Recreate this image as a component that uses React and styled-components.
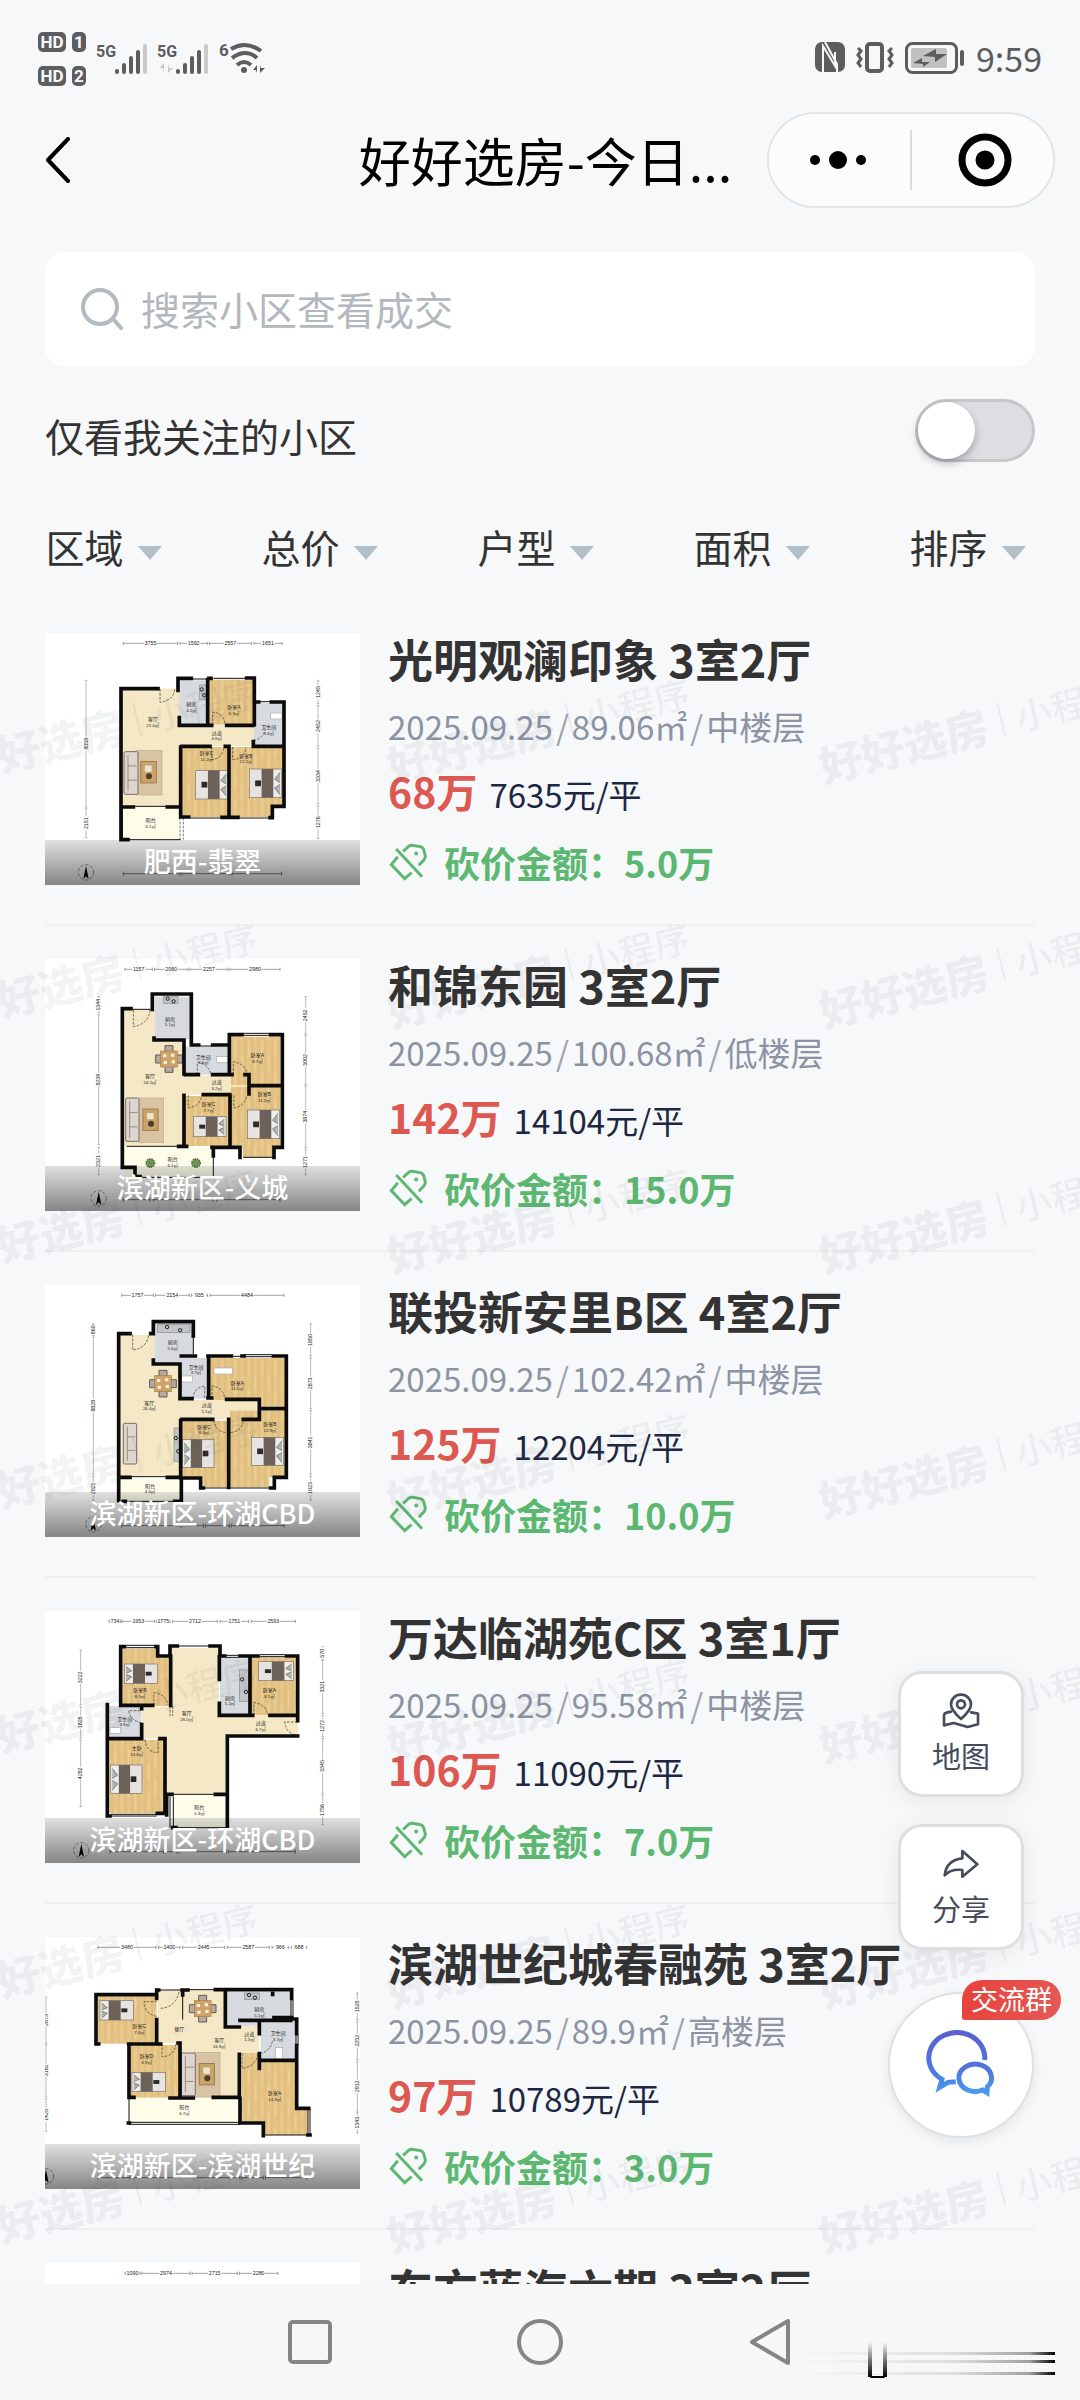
import React from "react";
import styled, { createGlobalStyle } from "styled-components";

const GlobalStyle = createGlobalStyle`
  * { box-sizing: border-box; }
  body {
    margin: 0;
    background: #f7f8fa;
    color: #333;
    font-family: "Noto Sans CJK SC", "Noto Sans", sans-serif;
  }
  button, input { font: inherit; color: inherit; }
  button { border: 0; padding: 0; background: none; cursor: pointer; }
`;

/* ---------- page frame ---------- */

const Screen = styled.div`
  position: relative;
  display: flex;
  flex-direction: column;
  height: 100vh;
  overflow: hidden;
`;

const StatusBar = styled.div`
  display: flex;
  justify-content: space-between;
  align-items: flex-start;
  height: 112px;
  padding: 32px 38px 0 38px;
  color: #5c5d5f;
`;

const StatusGroup = styled.div`
  display: flex;
  align-items: flex-start;
  gap: ${(p) => p.$gap}px;
  padding-top: ${(p) => p.$top || 0}px;
`;

const SimBadges = styled.div`
  display: grid;
  grid-template-columns: 28px 14px;
  gap: 14px 6px;
`;

const SimBadge = styled.span`
  height: 20px;
  border-radius: 5px;
  background: #5c5d5f;
  color: #f7f8fa;
  font-family: Roboto, "Liberation Sans", sans-serif;
  font-size: 17px;
  line-height: 20px;
  font-weight: 700;
  text-align: center;
`;

const StatusIcon = styled.svg`
  display: block;
  overflow: visible;
  font-family: Roboto, "Liberation Sans", sans-serif;
`;

const Clock = styled.time`
  font-size: 34px;
  line-height: 32px;
`;

const NavBar = styled.header`
  display: grid;
  grid-template-columns: 1fr auto 1fr;
  align-items: center;
  height: 96px;
  padding: 0 25px 0 36px;
`;

const BackButton = styled.button`
  justify-self: start;
  height: 64px;
  width: 44px;
  svg { display: block; margin: auto; }
`;

const PageTitle = styled.h1`
  margin: 0;
  color: #000;
  font-size: 52px;
  line-height: 76px;
  font-weight: 400;
  white-space: nowrap;
`;

const Capsule = styled.div`
  justify-self: end;
  display: flex;
  align-items: center;
  width: 288px;
  height: 96px;
  border: 2px solid #e4e4e6;
  border-radius: 48px;
  background: #fcfcfc;
`;

const CapsuleButton = styled.button`
  flex: 1;
  height: 60px;
  padding-right: 4px;
  display: flex;
  align-items: center;
  justify-content: center;
  & + & {
    padding: 0 0 0 4px;
    border-left: 2px solid #dcdcdc;
  }
`;

/* ---------- search and filters ---------- */

const SearchBox = styled.label`
  display: flex;
  align-items: center;
  gap: 18px;
  height: 114px;
  margin: 44px 45px 0;
  padding: 0 36px;
  border-radius: 20px;
  background: #fff;
`;

const SearchInput = styled.input`
  flex: 1;
  min-width: 0;
  border: 0;
  outline: 0;
  padding: 0 0 2px;
  background: none;
  font-size: 39px;
  line-height: 60px;
  &::placeholder { color: #b3b7be; opacity: 1; }
`;

const FollowRow = styled.div`
  display: flex;
  justify-content: space-between;
  align-items: flex-start;
  padding: 33px 45px 0;
`;

const FollowLabel = styled.label`
  padding-bottom: 2px;
  font-size: 39px;
  line-height: 72px;
`;

const Switch = styled.input`
  appearance: none;
  position: relative;
  width: 120px;
  height: 63px;
  margin: 0;
  border: 3px solid #c6c7c9;
  border-radius: 32px;
  background: #dddee2;
  &::before {
    content: "";
    position: absolute;
    left: 0;
    top: 0;
    width: 57px;
    height: 57px;
    border-radius: 50%;
    background: #fff;
    box-shadow: 0 4px 8px rgba(0, 0, 0, 0.28);
  }
  &:checked { background: #5cb86f; }
  &:checked::before { left: auto; right: 0; }
`;

const FilterBar = styled.nav`
  display: grid;
  grid-template-columns: repeat(5, 1fr);
  padding: 44px 0 25px;
`;

const FilterButton = styled.button`
  display: flex;
  align-items: center;
  justify-content: center;
  gap: 14px;
  padding-right: 9px;
  font-size: 39px;
  line-height: 58px;
`;

const Caret = styled.span`
  margin-top: 14px;
  border: 12px solid transparent;
  border-top: 14px solid #b3bfc8;
  border-bottom: 0;
`;

/* ---------- listing ---------- */

const ListArea = styled.main`
  position: relative;
  flex: 1;
  min-height: 0;
  overflow: hidden;
`;

const List = styled.ul`
  margin: 0;
  padding: 0 45px;
  list-style: none;
`;

const Item = styled.li`
  display: flex;
  align-items: flex-start;
  gap: 28px;
  padding: 33px 0 39px;
  border-bottom: 2px solid #eeeff1;
`;

const Thumb = styled.figure`
  position: relative;
  flex: none;
  width: 315px;
  height: 252px;
  margin: 0;
  overflow: hidden;
  background: #fff;
  svg { display: block; width: 100%; height: 100%; }
`;

const ThumbLabel = styled.figcaption`
  position: absolute;
  left: 0;
  right: 0;
  bottom: 0;
  height: 45px;
  background: linear-gradient(rgba(0, 0, 0, 0.12), rgba(0, 0, 0, 0.48));
  color: #fff;
  font-size: 27px;
  line-height: 42px;
  font-weight: 500;
  text-align: center;
`;

const Info = styled.div`
  flex: 1;
  min-width: 0;
`;

const Name = styled.h2`
  margin: 0;
  font-size: 45px;
  line-height: 52px;
  font-weight: 700;
  white-space: nowrap;
`;

const Meta = styled.p`
  margin: 18px 0 0;
  color: #8c94a3;
  font-size: 33px;
  line-height: 46px;
  white-space: nowrap;
`;

const Slash = styled.span`
  margin: 0 3px;
  color: #a0a4ab;
`;

const PriceRow = styled.p`
  display: flex;
  align-items: baseline;
  gap: 12px;
  margin: 14px 0 0;
  line-height: 54px;
`;

const Total = styled.strong`
  color: #dd5850;
  font-size: 41px;
`;

const Unit = styled.span`
  color: #1c2742;
  font-size: 33px;
`;

const Cut = styled.p`
  display: flex;
  align-items: center;
  gap: 16px;
  margin: 22px 0 0;
  color: #5cb870;
  font-size: 36px;
  line-height: 38px;
  font-weight: 700;
`;

const WatermarkLayer = styled.div`
  position: absolute;
  inset: 4px 0 0 -110px;
  display: grid;
  grid-template-columns: repeat(3, 432px);
  grid-auto-rows: 245px;
  overflow: hidden;
  pointer-events: none;
`;

const Watermark = styled.span`
  display: flex;
  align-items: center;
  justify-content: center;
  gap: 14px;
  color: rgba(60, 64, 80, 0.07);
  font-size: 36px;
  font-weight: 500;
  white-space: nowrap;
  transform: rotate(-14deg);
  b { font-size: 43px; font-weight: 900; }
  i { width: 2px; height: 34px; background: rgba(60, 64, 80, 0.07); }
`;

/* ---------- floating actions ---------- */

const FloatingStack = styled.div`
  position: absolute;
  right: 46px;
  bottom: 262px;
  display: flex;
  flex-direction: column;
  align-items: center;
  gap: 27px;
`;

const FloatButton = styled.button`
  display: flex;
  flex-direction: column;
  align-items: center;
  justify-content: center;
  gap: 4px;
  width: 126px;
  height: 126px;
  border: 3px solid #dedfe1;
  border-radius: 24px;
  background: #fff;
  box-shadow: 0 4px 24px rgba(0, 0, 0, 0.07);
  color: #454c5e;
  font-size: 29px;
  line-height: 42px;
`;

const ChatButton = styled.button`
  position: relative;
  width: 146px;
  height: 146px;
  margin-top: 15px;
  border: 2px solid #dfe0e2;
  border-radius: 50%;
  background: #fff;
  box-shadow: 0 4px 12px rgba(0, 0, 0, 0.08);
  svg { display: block; margin: 0 auto; }
`;

const ChatBadge = styled.span`
  position: absolute;
  top: -14px;
  right: -29px;
  height: 40px;
  padding: 0 9px;
  border-radius: 20px 20px 20px 3px;
  background: linear-gradient(100deg, #e8413a, #e35a57);
  color: #fff;
  font-size: 27px;
  line-height: 38px;
`;

/* ---------- system keys ---------- */

const SystemBar = styled.footer`
  position: relative;
  display: flex;
  align-items: center;
  justify-content: center;
  gap: 182px;
  height: 116px;
  background: #f7f7f7;
`;

const SystemKey = styled.button`
  display: flex;
  justify-content: center;
  width: 48px;
`;

const Smudge = styled.svg`
  position: absolute;
  right: 24px;
  bottom: 20px;
`;

/* ---------- status icons ---------- */

const Signal = ({ data }) => (
  <StatusIcon width="50" height="32" viewBox="0 0 50 32" fill="#5c5d5f">
    <text x="-2" y="15" fontSize="16" fontWeight="700">5G</text>
    {data && <path d="M5 31V21L1 26h3M9 21v10l5-5h-4" fill="#c4c5c7" />}
    <rect x="17" y="27" width="4" height="5" rx="2" />
    <rect x="24" y="21" width="4" height="11" rx="2" />
    <rect x="31" y="14" width="4" height="18" rx="2" />
    <rect x="38" y="8" width="4" height="24" rx="2" />
    <rect x="45" y="2" width="4" height="30" rx="2" fill="#c9cacc" />
  </StatusIcon>
);

const Wifi = () => (
  <StatusIcon width="46" height="32" viewBox="0 0 46 32" fill="none" stroke="#5c5d5f" strokeWidth="4">
    <text x="-1" y="14" fontSize="17" fontWeight="700" fill="#5c5d5f" stroke="none">6</text>
    <path d="M11 7Q26-2 41 9M12 16Q26 6 37 16M17 23Q24 17 31 23" />
    <circle cx="24" cy="28" r="3" fill="#5c5d5f" stroke="none" />
    <path d="M37 31V23l-4 5h3zM40 23v8l5-5h-4z" fill="#5c5d5f" stroke="none" />
  </StatusIcon>
);

const Nfc = () => (
  <StatusIcon width="30" height="30" viewBox="0 0 30 30">
    <rect width="30" height="30" rx="7" fill="#5c5d5f" />
    <path d="M8 30V4L20 24V10M10 0L22 22V30" fill="none" stroke="#f7f8fa" strokeWidth="2" />
  </StatusIcon>
);

const Vibrate = () => (
  <StatusIcon width="38" height="31" viewBox="0 0 38 31" fill="none" stroke="#5c5d5f" strokeWidth="3">
    <rect x="11" y="2" width="15" height="27" rx="3" strokeWidth="4" />
    <path d="M2 6l3 3-3 4 3 4-3 4 3 4M36 6l-3 3 3 4-3 4 3 4-3 4" />
  </StatusIcon>
);

const Battery = () => (
  <StatusIcon width="60" height="32" viewBox="0 0 60 32">
    <rect x="1.5" y="1.5" width="50" height="29" rx="6" fill="none" stroke="#5c5d5f" strokeWidth="3" />
    <rect x="6" y="6" width="36" height="20" rx="2" fill="#bfc1c2" />
    <path d="M18 14L31 7V12H42L30 20V15ZM8 21L17 16V20H25L18 25V22Z" fill="#5c5d5f" />
    <rect x="55" y="8" width="4" height="16" rx="2" fill="#5c5d5f" />
  </StatusIcon>
);

/* ---------- floor plan drawing ---------- */

const FILLS = { wood: "url(#wood)", tile: "url(#tile)", cream: "url(#cream)", porch: "#fdfdea" };

const HiddenDefs = styled.svg`
  position: absolute;
`;

const PlanSvg = styled.svg`
  font-family: "Liberation Sans", "Noto Sans CJK SC", sans-serif;
`;

const PatternDefs = () => (
  <HiddenDefs width="0" height="0" aria-hidden="true">
    <defs>
      <pattern id="wood" width="40" height="90" patternUnits="userSpaceOnUse">
        <rect width="40" height="90" fill="#e5c486" />
        <path d="M6 0V90M26 0V90" stroke="#dcb876" strokeWidth="3" />
        <path d="M16 0V50M36 40V90" stroke="#ecd199" strokeWidth="4" />
      </pattern>
      <pattern id="tile" width="12" height="12" patternUnits="userSpaceOnUse">
        <rect width="12" height="12" fill="#d8dbdf" />
        <path d="M0 0H12M0 0V12" stroke="#ccd0d5" strokeWidth="1.5" />
      </pattern>
      <pattern id="cream" width="26" height="26" patternUnits="userSpaceOnUse">
        <rect width="26" height="26" fill="#f5e8c6" />
        <path d="M0 0H26M0 0V26" stroke="#f0dfb8" strokeWidth="2" />
      </pattern>
    </defs>
  </HiddenDefs>
);

const Bed = ({ at: [x, y, w, h, flip] }) => (
  <g transform={flip ? `translate(${2 * x + w} 0) scale(-1 1)` : undefined}>
    <rect x={x} y={y} width={w} height={h} fill="#e6e3e0" stroke="#77706a" strokeWidth="2" />
    <rect x={x + w * 0.38} y={y} width={w * 0.36} height={h} fill="#6d625a" />
    <rect x={x + w * 0.76} y={y + 3} width={w * 0.22} height={h - 6} fill="#efedea" />
    <path
      d={`M${x + w * 0.95} ${y + h * 0.12}L${x + w * 0.78} ${y + h * 0.36}L${x + w * 0.95} ${y + h * 0.48}M${x + w * 0.95} ${y + h * 0.54}L${x + w * 0.78} ${y + h * 0.66}L${x + w * 0.95} ${y + h * 0.9}`}
      fill="#a9b4b6"
      stroke="#655b52"
      strokeWidth="2"
    />
    <rect x={x + w * 0.18} y={y + h * 0.4} width={w * 0.18} height={h * 0.2} fill="#2d2a28" />
  </g>
);

const Sofa = ({ at: [x, y, w, h] }) => (
  <g fill="#ddd5ce" stroke="#786b63" strokeWidth="3">
    <rect x={x} y={y} width={w} height={h} rx="4" />
    <path d={`M${x + 12} ${y + 10}V${y + h - 10}M${x + 12} ${y + h / 3}H${x + w - 4}M${x + 12} ${y + (h * 2) / 3}H${x + w - 4}`} fill="none" strokeWidth="2" />
  </g>
);

const Rug = ({ at: [x, y, w, h] }) => (
  <g>
    <rect x={x} y={y} width={w} height={h} fill="#d8c4a4" stroke="#c0aa8c" strokeWidth="2" />
    <rect x={x + w * 0.18} y={y + h * 0.25} width={w * 0.6} height={h * 0.48} fill="#c9a468" stroke="#a07c4c" strokeWidth="3" />
    <rect x={x + w * 0.34} y={y + h * 0.34} width={w * 0.26} height={h * 0.14} fill="#ece4d6" />
    <circle cx={x + w * 0.5} cy={y + h * 0.58} r="9" fill="#4e3b28" />
  </g>
);

const Dining = ({ at: [x, y] }) => (
  <g transform={`translate(${x} ${y})`}>
    <path d="M-12-40H12V-20H-12ZM-12 20H12V40H-12ZM-40-12H-20V12H-40ZM20-12H40V12H20Z" fill="#b4aaa1" stroke="#645b54" strokeWidth="3" />
    <rect x="-25" y="-24" width="50" height="48" fill="#cfa366" stroke="#a47c46" strokeWidth="2" />
    <path d="M-18-14h10v9h-10zM6-16h10v9h-10zM-16 6h10v9h-10zM8 4h10v9h-10z" fill="#f6f2e9" />
  </g>
);

const DimText = ({ x, y, v, children }) => (
  <text x={x} y={y} fontSize="16" textAnchor="middle" fill="#222" transform={v ? `rotate(-90 ${x} ${y})` : undefined}>
    {children}
  </text>
);

const FloorPlan = ({ plan }) => (
  <PlanSvg viewBox={`45 ${plan.top} 945 756`} preserveAspectRatio="none" role="img" aria-label="户型图">
    <rect x="45" y={plan.top} width="945" height="756" fill="#fff" />
    {plan.rooms.map(([kind, x, y, w, h], i) => (
      <rect key={i} x={x} y={y} width={w} height={h} fill={FILLS[kind]} />
    ))}
    {(plan.rugs || []).map((r, i) => <Rug key={i} at={r} />)}
    {(plan.sofas || []).map((r, i) => <Sofa key={i} at={r} />)}
    {(plan.beds || []).map((r, i) => <Bed key={i} at={r} />)}
    {(plan.tables || []).map((r, i) => <Dining key={i} at={r} />)}
    {(plan.whites || []).map(([x, y, w, h], i) => (
      <rect key={i} x={x} y={y} width={w} height={h} fill="#fff" stroke="#aaa" strokeWidth="2" />
    ))}
    {(plan.stoves || []).map(([x, y, w, h], i) => (
      <g key={i}>
        <rect x={x} y={y} width={w} height={h} fill="#c2c4c6" stroke="#8b8d90" strokeWidth="2" />
        <circle cx={x + w * 0.3} cy={y + h * 0.3} r="5" fill="none" stroke="#222" strokeWidth="3" />
        <circle cx={x + w * 0.7} cy={y + h * 0.7} r="5" fill="none" stroke="#222" strokeWidth="3" />
      </g>
    ))}
    {(plan.plants || []).map(([x, y], i) => (
      <circle key={i} cx={x} cy={y} r="13" fill="#6f9252" stroke="#4b6a37" strokeWidth="4" strokeDasharray="4 3" />
    ))}
    <path d={plan.doors} fill="none" stroke="#333" strokeWidth="2" strokeDasharray="8 4" />
    <path d={plan.thin} fill="none" stroke="#111" strokeWidth="3" />
    <path d={plan.walls} fill="none" stroke="#0b0b0b" strokeWidth="11" strokeLinecap="square" />
    {plan.names.map(([x, y, name, area], i) => (
      <g key={i} fontSize="15" textAnchor="middle" fill="#222">
        <text x={x} y={y}>{name}</text>
        {area && <text x={x} y={y + 17} fontSize="13">{area}</text>}
      </g>
    ))}
    {plan.across.map(([x1, x2, n], i) => (
      <g key={i}>
        <path d={`M${x1} ${plan.top + 31}H${(x1 + x2) / 2 - 20}M${(x1 + x2) / 2 + 20} ${plan.top + 31}H${x2}M${x1} ${plan.top + 26}v10M${x2} ${plan.top + 26}v10`} stroke="#777" strokeWidth="2" />
        <DimText x={(x1 + x2) / 2} y={plan.top + 37}>{n}</DimText>
      </g>
    ))}
    {plan.down.map(([x, y1, y2, n], i) => (
      <g key={i}>
        <path d={`M${x} ${y1}V${(y1 + y2) / 2 - 20}M${x} ${(y1 + y2) / 2 + 20}V${y2}M${x - 4} ${y1}h8M${x - 4} ${y2}h8`} stroke="#999" strokeWidth="2" />
        <DimText x={x + 5} y={(y1 + y2) / 2} v>{n}</DimText>
      </g>
    ))}
    <g transform={`translate(${plan.north} ${plan.top + 718})`}>
      <circle r="23" fill="none" stroke="#666" strokeWidth="2" strokeDasharray="10 5" />
      <path d="M0-20L8 20L0 12L-8 20Z" fill="#000" />
    </g>
    {plan.base.map(([x1, x2], i) => (
      <path key={i} d={`M${x1} ${plan.top + 722}H${x2}M${x1} ${plan.top + 716}v12M${x2} ${plan.top + 716}v12`} stroke="#444" strokeWidth="2" />
    ))}
  </PlanSvg>
);

const PLANS = [
  {
    top: 38,
    north: 168,
    rooms: [
      ["cream", 275, 205, 175, 355], ["cream", 440, 315, 232, 62], ["tile", 448, 180, 85, 133],
      ["wood", 537, 178, 132, 135], ["tile", 672, 248, 90, 128], ["wood", 455, 380, 143, 210],
      ["wood", 602, 380, 125, 210], ["wood", 720, 380, 40, 180], ["porch", 275, 562, 172, 96],
    ],
    rugs: [[318, 390, 78, 134]],
    sofas: [[282, 394, 42, 128]],
    beds: [[497, 450, 97, 86], [658, 446, 97, 86]],
    whites: [[722, 278, 34, 18]],
    stoves: [[509, 194, 20, 44]],
    walls: "M384 205H273V658H294M444 210V174H484M448 292V315H545M533 178V312M590 315H668M543 174H537M650 173H673V313M673 245H686M724 245H762V558H727V592H720M670 364V378H756M586 378H597V590M456 378H540M452 380V590H476M576 591H624M278 560H310M412 560H446",
    thin: "M484 176H533M550 174H645M690 244H720M480 593H570M630 593H715M277 562V658H452M300 558H450",
    doors: "M390 206V246Q432 240 434 206M548 314V276Q580 276 586 314M545 380V418Q576 416 582 380M608 380V418Q645 416 648 380M670 360Q700 356 706 325M450 592V658M460 592V658",
    names: [[368, 303, "客厅", "22.4㎡"], [484, 258, "厨房", "4.2㎡"], [612, 266, "卧室A", "6.3㎡"], [560, 343, "过道", "4.6㎡"], [716, 327, "卫生间", "3.4㎡"], [530, 405, "卧室C", "11.2㎡"], [648, 412, "卧室B", "12.1㎡"], [362, 605, "阳台", "6.1㎡"]],
    across: [[280, 443, "3755"], [450, 532, "1592"], [538, 664, "2557"], [672, 756, "1651"]],
    down: [[168, 180, 560, "8058"], [168, 565, 652, "2151"], [864, 180, 250, "1245"], [864, 256, 378, "2452"], [864, 384, 550, "3334"], [864, 556, 655, "1276"]],
    base: [[280, 450], [456, 600], [606, 755]],
  },
  {
    top: 25,
    north: 206,
    rooms: [
      ["cream", 283, 178, 178, 408], ["tile", 375, 138, 107, 128], ["tile", 465, 288, 130, 84],
      ["cream", 458, 374, 200, 58], ["wood", 603, 258, 147, 145], ["wood", 466, 436, 132, 150],
      ["wood", 603, 408, 147, 185], ["wood", 638, 590, 92, 30], ["porch", 283, 590, 266, 88],
    ],
    rugs: [[325, 442, 76, 133]],
    sofas: [[287, 442, 40, 130]],
    beds: [[490, 498, 98, 60], [652, 478, 97, 86]],
    tables: [[417, 325]],
    whites: [[560, 318, 34, 18]],
    stoves: [[400, 138, 44, 20]],
    plants: [[361, 637], [498, 637]],
    walls: "M303 174H277V650H315V678H330M367 176V130H484V280M484 283H506M548 283H590M372 262V268H462V370M462 434V585M466 372H505M548 372H606M598 252V370M600 252H636M722 252H757V590H732V620M645 372H657V430M660 405H750M600 434V585M520 432H598M546 590H630V620M550 595V616M446 587H470",
    thin: "M640 248H718M640 254H718M510 286H545M482 175V235M550 620V678M330 680H550M640 620H730M290 587H460M308 176H362",
    doors: "M310 178V228Q356 220 360 178M502 372V335Q538 342 542 372M610 372V333Q648 340 650 370M475 434V472Q512 466 515 434M612 434V472Q646 466 650 434",
    names: [[360, 382, "客厅", "24.5㎡"], [420, 210, "厨房", "5.1㎡"], [520, 324, "卫生间", "3.6㎡"], [682, 320, "卧室A", "8.7㎡"], [560, 400, "过道", "3.2㎡"], [536, 466, "卧室C", "7.7㎡"], [703, 437, "卧室B", "11.2㎡"], [428, 632, "阳台", "6.1㎡"]],
    across: [[285, 367, "1157"], [373, 474, "2060"], [480, 594, "2257"], [600, 750, "2980"]],
    down: [[206, 138, 186, "1344"], [206, 192, 582, "8239"], [206, 590, 672, "2321"], [827, 138, 250, "2452"], [827, 254, 402, "3002"], [827, 406, 590, "3874"], [827, 596, 672, "1271"]],
    base: [[280, 360], [370, 550], [560, 750]],
  },
  {
    top: 43,
    north: 190,
    rooms: [
      ["cream", 270, 193, 182, 424], ["tile", 374, 158, 115, 122], ["tile", 454, 262, 80, 122],
      ["wood", 540, 262, 226, 150], ["cream", 448, 388, 238, 58], ["wood", 456, 450, 140, 170],
      ["wood", 520, 618, 74, 32], ["wood", 600, 420, 166, 200], ["wood", 600, 618, 118, 32], ["porch", 268, 622, 188, 70],
    ],
    sofas: [[280, 458, 40, 122]],
    beds: [[458, 506, 94, 85, true], [664, 500, 97, 84]],
    tables: [[399, 339]],
    whites: [[454, 316, 34, 18], [552, 292, 56, 18]],
    stoves: [[382, 162, 98, 24], [432, 472, 18, 100]],
    walls: "M300 189H266V690M362 189H370V153H490V196M370 268V280H450V380M454 256H496M450 384H486M534 382H545M536 260V380M534 256H604M642 256H636M730 256H769V620H733V652H722M590 386H688V446H640M690 414H765M456 446H548M452 450V622H512V652H520M596 446V650M266 620H300M412 620H450M454 625V690M280 692H286M434 692H444",
    thin: "M605 257H640M640 252H725M640 258H725M490 190V250M522 652H718M266 692H454M305 618H410",
    doors: "M308 192V238Q352 232 356 192M488 384Q492 350 524 346V384M546 384V346Q580 350 584 384M552 448Q556 484 592 486M602 486Q638 480 640 448",
    names: [[358, 402, "客厅", "26.4㎡"], [428, 220, "厨房", "5.6㎡"], [498, 294, "卫生间", "3.7㎡"], [622, 342, "卧室A", "11.5㎡"], [530, 410, "过道", "5.1㎡"], [522, 474, "卧室C", "8.4㎡"], [720, 467, "卧室B", "12.9㎡"], [360, 651, "阳台", "4.6㎡"]],
    across: [[275, 370, "1757"], [376, 478, "2154"], [484, 532, "935"], [540, 762, "4484"]],
    down: [[190, 160, 195, "860"], [190, 200, 610, "8828"], [190, 616, 690, "2021"], [842, 160, 256, "1850"], [842, 262, 414, "2873"], [842, 420, 610, "3841"], [842, 616, 688, "1023"]],
    base: [[275, 450], [456, 520], [526, 598], [604, 762]],
  },
  {
    top: 33,
    north: 154,
    rooms: [
      ["wood", 278, 146, 108, 172], ["wood", 380, 172, 42, 146], ["cream", 426, 144, 140, 440],
      ["cream", 336, 320, 100, 96], ["cream", 408, 348, 178, 234], ["cream", 560, 348, 244, 60],
      ["tile", 570, 172, 88, 174], ["wood", 662, 172, 138, 174], ["tile", 236, 318, 98, 98],
      ["wood", 238, 420, 166, 220], ["porch", 430, 586, 157, 96],
    ],
    beds: [[283, 192, 100, 58, true], [686, 185, 104, 57], [242, 495, 94, 85, true]],
    whites: [[240, 382, 32, 18]],
    stoves: [[628, 210, 28, 94]],
    walls: "M284 140H272V316H368M378 140H383V168H422V316M420 166V138H442M540 138H570V168H584M568 170V238M568 310V346H668M660 170V344M630 168H684M720 346H798M770 168H803V362M803 408H592V683M232 314V648H240M275 316H335V326M335 374V416H238M390 416H405V640H382M410 645V583H426M556 583H588M428 683H438",
    thin: "M290 136H375M290 143H375M447 138H535M587 166H625M587 172H625M690 164H765M690 170H765M243 648H380M243 643H380M430 683H595M420 590V683M430 590V683M430 583H550",
    doors: "M372 316V278Q408 282 414 316M334 368Q300 362 296 332H334M345 418Q350 458 384 458V418M672 346V308Q708 312 714 346M803 366H764Q768 402 803 406M420 318V348M428 318V348",
    names: [[330, 276, "卧室B", "8.5㎡"], [470, 346, "客厅", "26.0㎡"], [600, 299, "厨房", "5.2㎡"], [718, 276, "卧室A", "8.1㎡"], [692, 376, "过道", "6.7㎡"], [284, 362, "卫生间", "3.9㎡"], [320, 450, "主卧", "14.6㎡"], [508, 628, "阳台", "5.3㎡"]],
    across: [[238, 272, "734"], [276, 374, "1953"], [380, 420, "1775"], [428, 562, "2712"], [570, 656, "1751"], [664, 796, "2593"]],
    down: [[152, 150, 314, "3222"], [152, 320, 414, "1828"], [152, 420, 620, "4282"], [878, 140, 180, "570"], [878, 180, 340, "3321"], [878, 346, 410, "1272"], [878, 416, 580, "3345"], [878, 586, 674, "1756"]],
    base: [[240, 400], [406, 440], [446, 590], [596, 796]],
  },
  {
    top: 52,
    north: 48,
    rooms: [
      ["wood", 204, 230, 176, 142], ["cream", 384, 212, 200, 158], ["cream", 450, 212, 134, 322],
      ["cream", 560, 326, 70, 208], ["cream", 628, 304, 60, 96], ["tile", 590, 216, 194, 102],
      ["tile", 692, 304, 106, 116], ["wood", 302, 376, 144, 158], ["wood", 634, 400, 54, 206],
      ["wood", 680, 426, 116, 182], ["wood", 704, 570, 130, 76], ["porch", 297, 537, 332, 70],
    ],
    rugs: [[494, 398, 76, 134]],
    sofas: [[454, 400, 42, 128]],
    beds: [[210, 243, 100, 58, true], [306, 458, 100, 58, true]],
    tables: [[518, 267]],
    whites: [[736, 384, 22, 34]],
    stoves: [[644, 220, 44, 20]],
    walls: "M378 225H198V373H206M380 211V236M380 211H386M380 300V368M456 211H474M458 215V226M556 210H785V236M586 214V322H628M728 222V224M732 294H785V298H800V342M630 302H782M688 304V342M688 402V446M692 422H800V566H836M800 378V422M296 373H392M444 370H450V535H490M297 376V533H312M420 535H450M550 533H628V404M630 536V610H700V648M295 610H298M834 646H840",
    thin: "M390 211H450M478 210H552M783 240V294M789 240V294M798 345V376M804 345V376M834 568V645M840 568V645M705 646H835M297 614H630M297 608H630M297 537V610M458 226V300",
    doors: "M380 290Q342 282 342 246H380M392 266Q440 262 448 212M396 372V412Q434 408 438 372M636 400V446Q680 440 684 400M690 402Q720 396 728 362",
    names: [[328, 326, "卧室C", "7.4㎡"], [448, 334, "餐厅", ""], [568, 368, "客厅", "24.8㎡"], [688, 274, "厨房", "5.1㎡"], [658, 348, "过道", "1.3㎡"], [744, 347, "卫生间", "3.7㎡"], [350, 416, "卧室D", "6.9㎡"], [734, 527, "卧室A", "14.3㎡"], [463, 569, "阳台", "6.7㎡"]],
    across: [[204, 378, "3480"], [386, 450, "1400"], [458, 584, "2445"], [592, 718, "2587"], [726, 776, "966"], [784, 830, "688"]],
    down: [[48, 232, 370, "2873"], [48, 374, 530, "3161"], [48, 536, 636, "1425"], [982, 220, 300, "1520"], [982, 306, 420, "2252"], [982, 426, 574, "2912"], [982, 578, 640, "1343"]],
    base: [[204, 300], [310, 630], [636, 700], [706, 830]],
  },
  {
    top: 38,
    north: 168,
    rooms: [],
    walls: "",
    thin: "",
    doors: "",
    names: [],
    across: [[285, 330, "1090"], [336, 480, "2974"], [486, 622, "2715"], [628, 744, "2280"]],
    down: [],
    base: [],
  },
];

/* ---------- data ---------- */

const LISTINGS = [
  { name: "光明观澜印象 3室2厅", date: "2025.09.25", area: "89.06㎡", floor: "中楼层", total: "68万", unit: "7635元/平", cut: "5.0万", region: "肥西-翡翠" },
  { name: "和锦东园 3室2厅", date: "2025.09.25", area: "100.68㎡", floor: "低楼层", total: "142万", unit: "14104元/平", cut: "15.0万", region: "滨湖新区-义城" },
  { name: "联投新安里B区 4室2厅", date: "2025.09.25", area: "102.42㎡", floor: "中楼层", total: "125万", unit: "12204元/平", cut: "10.0万", region: "滨湖新区-环湖CBD" },
  { name: "万达临湖苑C区 3室1厅", date: "2025.09.25", area: "95.58㎡", floor: "中楼层", total: "106万", unit: "11090元/平", cut: "7.0万", region: "滨湖新区-环湖CBD" },
  { name: "滨湖世纪城春融苑 3室2厅", date: "2025.09.25", area: "89.9㎡", floor: "高楼层", total: "97万", unit: "10789元/平", cut: "3.0万", region: "滨湖新区-滨湖世纪" },
  { name: "东方蓝海六期 3室2厅" },
];

const FILTERS = ["区域", "总价", "户型", "面积", "排序"];

const TagIcon = () => (
  <svg width="40" height="38" viewBox="55 680 120 116" fill="none" stroke="#5cb870" strokeWidth="9">
    <path d="M79 698L158 783M100 706L116 691Q121 686 128 687L152 691Q161 693 163 701L168 720Q168 726 164 731L148 748M84 722L64 746L105 789L126 770" />
    <circle cx="140" cy="712" r="6" fill="#5cb870" stroke="none" />
  </svg>
);

const Listing = ({ item, plan }) => (
  <Item>
    <Thumb>
      <FloorPlan plan={plan} />
      {item.region && <ThumbLabel>{item.region}</ThumbLabel>}
    </Thumb>
    <Info>
      <Name>{item.name}</Name>
      {item.date && (
        <>
          <Meta>
            {item.date}<Slash>/</Slash>{item.area}<Slash>/</Slash>{item.floor}
          </Meta>
          <PriceRow>
            <Total>{item.total}</Total>
            <Unit>{item.unit}</Unit>
          </PriceRow>
          <Cut>
            <TagIcon />
            <span>砍价金额：{item.cut}</span>
          </Cut>
        </>
      )}
    </Info>
  </Item>
);

export default function App() {
  return (
    <Screen>
      <GlobalStyle />
      <PatternDefs />

      <StatusBar>
        <StatusGroup $gap={12}>
          <SimBadges>
            <SimBadge>HD</SimBadge>
            <SimBadge>1</SimBadge>
            <SimBadge>HD</SimBadge>
            <SimBadge>2</SimBadge>
          </SimBadges>
          <StatusGroup $gap={11} $top={10}>
            <Signal />
            <Signal data />
            <Wifi />
          </StatusGroup>
        </StatusGroup>
        <StatusGroup $gap={11} $top={10}>
          <Nfc />
          <Vibrate />
          <Battery />
          <Clock>9:59</Clock>
        </StatusGroup>
      </StatusBar>

      <NavBar>
        <BackButton aria-label="返回">
          <svg width="26" height="46" viewBox="0 0 26 46" fill="none" stroke="#000" strokeWidth="4">
            <path d="M23 2L3 23L23 44" strokeLinecap="round" strokeLinejoin="round" />
          </svg>
        </BackButton>
        <PageTitle>好好选房-今日...</PageTitle>
        <Capsule>
          <CapsuleButton aria-label="更多">
            <svg width="58" height="20" viewBox="0 0 58 20">
              <circle cx="6" cy="10" r="5" />
              <circle cx="29" cy="10" r="9" />
              <circle cx="52" cy="10" r="5" />
            </svg>
          </CapsuleButton>
          <CapsuleButton aria-label="关闭">
            <svg width="54" height="54" viewBox="0 0 54 54">
              <circle cx="27" cy="27" r="23" fill="none" stroke="#000" strokeWidth="7" />
              <circle cx="27" cy="27" r="9.5" />
            </svg>
          </CapsuleButton>
        </Capsule>
      </NavBar>

      <SearchBox>
        <svg width="42" height="42" viewBox="0 0 42 42" fill="none" stroke="#b3bac1" strokeWidth="4">
          <circle cx="19" cy="19" r="17" />
          <path d="M32 31L40 40" strokeLinecap="round" />
        </svg>
        <SearchInput type="text" placeholder="搜索小区查看成交" aria-label="搜索小区查看成交" />
      </SearchBox>

      <FollowRow>
        <FollowLabel htmlFor="followed">仅看我关注的小区</FollowLabel>
        <Switch id="followed" type="checkbox" />
      </FollowRow>

      <FilterBar>
        {FILTERS.map((label) => (
          <FilterButton key={label}>
            {label}
            <Caret />
          </FilterButton>
        ))}
      </FilterBar>

      <ListArea>
        <List>
          {LISTINGS.map((item, i) => (
            <Listing key={item.name} item={item} plan={PLANS[i]} />
          ))}
        </List>
        <WatermarkLayer aria-hidden="true">
          {Array.from({ length: 21 }, (_, i) => (
            <Watermark key={i}>
              <b>好好选房</b>
              <i />
              小程序
            </Watermark>
          ))}
        </WatermarkLayer>
      </ListArea>

      <FloatingStack>
        <FloatButton>
          <svg width="38" height="38" viewBox="249 172 114 112" fill="none" stroke="#454c5e" strokeWidth="8" strokeLinejoin="round">
            <path d="M306 252Q276 226 276 208A30 29 0 0 1 336 208Q336 226 306 252Z" />
            <circle cx="306" cy="208" r="12" />
            <path d="M276 230L262 233Q255 235 255 242V271L284 264L326 276L357 268V236L336 232" strokeLinecap="round" />
          </svg>
          地图
        </FloatButton>
        <FloatButton>
          <svg width="38" height="38" viewBox="249 620 114 112" fill="none" stroke="#454c5e" strokeWidth="8" strokeLinejoin="round">
            <path d="M310 637L355 677L310 714V694Q276 690 257 710Q262 664 310 659Z" />
          </svg>
          分享
        </FloatButton>
        <ChatButton aria-label="交流群">
          <svg width="74" height="70" viewBox="196 1180 222 210" fill="none" stroke="url(#chat)" strokeWidth="15">
            <defs>
              <linearGradient id="chat" gradientUnits="userSpaceOnUse" x1="0" y1="1190" x2="0" y2="1380">
                <stop offset="0" stopColor="#5a62cf" />
                <stop offset="0.6" stopColor="#4f78dd" />
                <stop offset="1" stopColor="#4aa0f5" />
              </linearGradient>
            </defs>
            <path d="M378 1270A84 76 0 1 0 250 1328L243 1352L268 1337L291 1335" />
            <path d="M372 1360A49 41 0 1 1 386 1351L385 1368Z" />
          </svg>
          <ChatBadge>交流群</ChatBadge>
        </ChatButton>
      </FloatingStack>

      <SystemBar>
        <SystemKey aria-label="最近任务">
          <svg width="44" height="44" viewBox="0 0 44 44" fill="none" stroke="#858585" strokeWidth="4">
            <rect x="2" y="2" width="40" height="40" rx="3" />
          </svg>
        </SystemKey>
        <SystemKey aria-label="主屏幕">
          <svg width="48" height="48" viewBox="0 0 48 48" fill="none" stroke="#858585" strokeWidth="4">
            <circle cx="24" cy="24" r="21" />
          </svg>
        </SystemKey>
        <SystemKey aria-label="返回上一级">
          <svg width="44" height="48" viewBox="0 0 44 48" fill="none" stroke="#858585" strokeWidth="4" strokeLinejoin="round">
            <path d="M40 3V45L4 24Z" />
          </svg>
        </SystemKey>
        <Smudge width="256" height="40" viewBox="0 0 256 40" aria-hidden="true">
          <defs>
            <linearGradient id="streak">
              <stop offset="0" stopColor="#000" stopOpacity="0" />
              <stop offset="0.6" stopColor="#000" stopOpacity="0.1" />
              <stop offset="0.9" stopColor="#000" stopOpacity="0.35" />
              <stop offset="1" stopColor="#000" />
            </linearGradient>
            <linearGradient id="drip" x1="0" y1="0" x2="0" y2="1">
              <stop offset="0" stopColor="#000" stopOpacity="0" />
              <stop offset="1" stopColor="#000" />
            </linearGradient>
          </defs>
          <rect x="0" y="12" width="255" height="3" fill="url(#streak)" />
          <rect x="0" y="20" width="255" height="3" fill="url(#streak)" />
          <rect x="0" y="32" width="255" height="3" fill="url(#streak)" />
          <rect x="71" y="4" width="14" height="30" fill="#f7f7f7" />
          <rect x="68" y="2" width="4" height="35" fill="url(#drip)" />
          <rect x="83" y="2" width="4" height="35" fill="url(#drip)" />
          <rect x="70" y="36" width="15" height="2" rx="1" fill="#000" />
        </Smudge>
      </SystemBar>
    </Screen>
  );
}
